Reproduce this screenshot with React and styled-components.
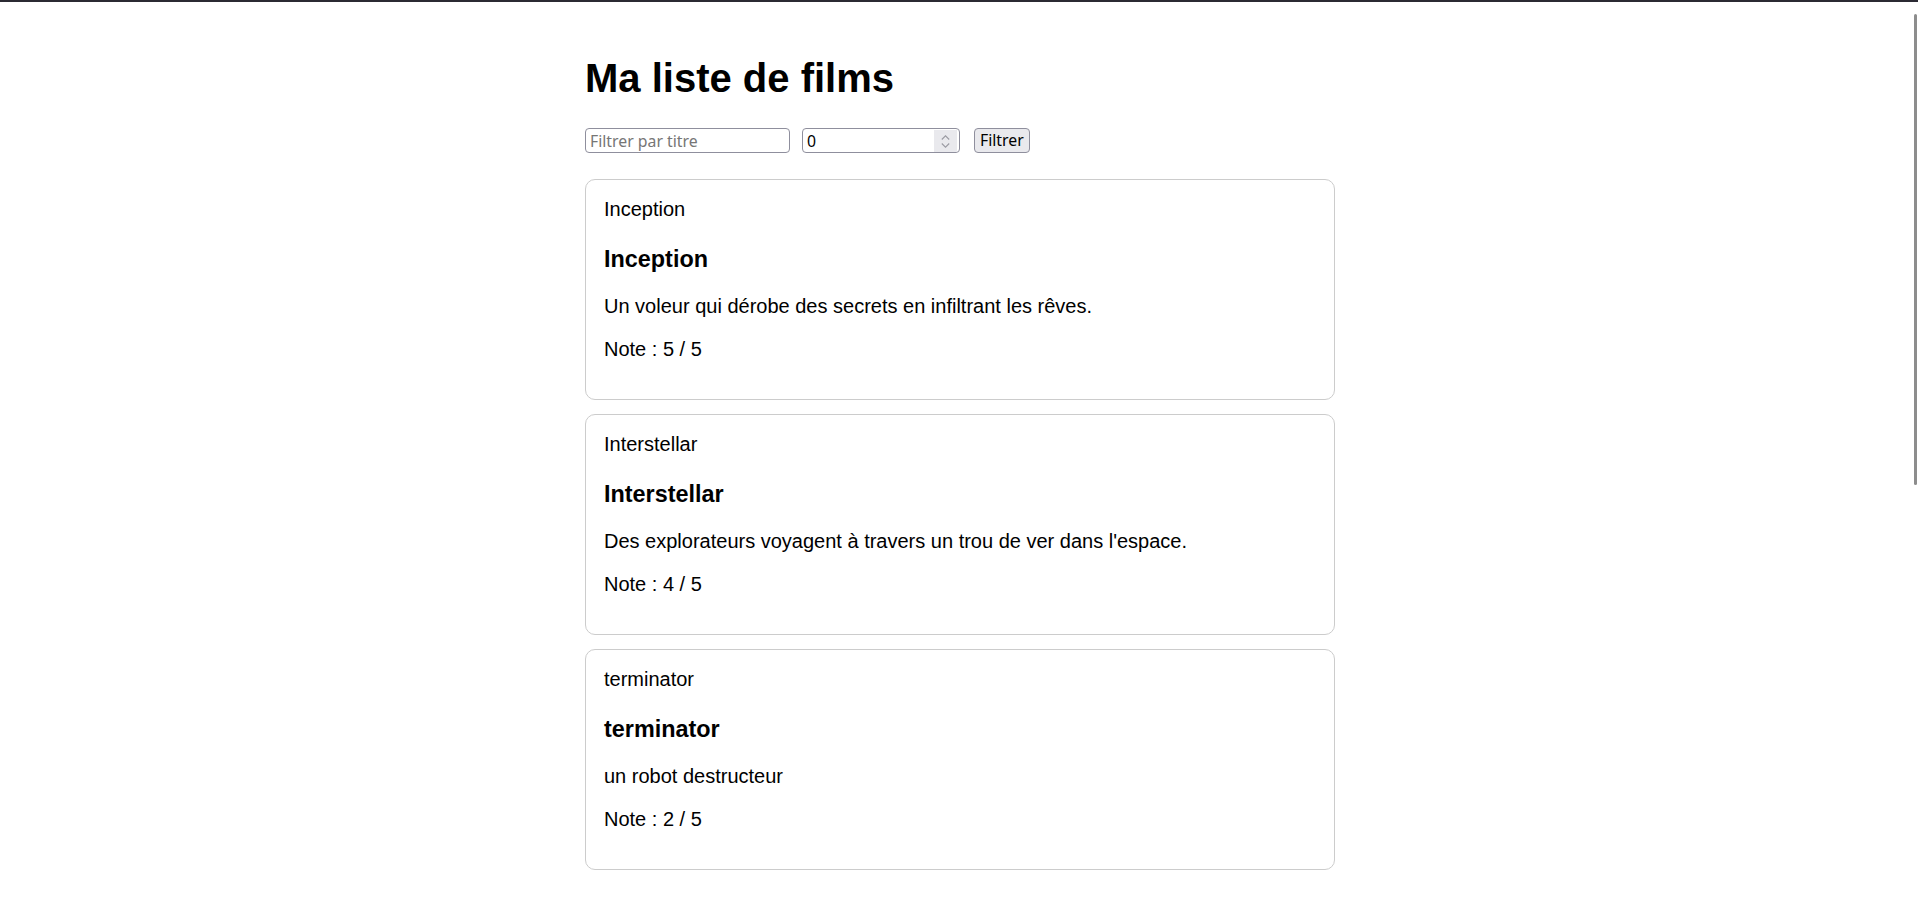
import React, { useState } from "react";
import styled, { createGlobalStyle } from "styled-components";

const GlobalStyle = createGlobalStyle`
  html, body {
    margin: 0;
    padding: 0;
    background: #ffffff;
  }
  body {
    font-family: "Liberation Sans", Arial, sans-serif;
    color: #000000;
    overflow: hidden;
  }
`;

const TopEdge = styled.div`
  height: 2px;
  background: #2b2a33;
`;

const Page = styled.div`
  display: flex;
  justify-content: center;
  padding: 53px 0 0 2px;
`;

const Container = styled.main`
  width: 750px;
`;

const Title = styled.h1`
  margin: 0 0 27px;
  font-size: 40px;
  line-height: 46px;
  font-weight: 700;
`;

const FilterBar = styled.form`
  display: flex;
  align-items: center;
  height: 25px;
  margin: 0 0 26px;
`;

const controlFont = `
  font-family: "Noto Sans", "Open Sans", sans-serif;
  font-size: 15.8px;
`;

const TextInput = styled.input`
  box-sizing: border-box;
  width: 205px;
  height: 25px;
  margin: 0 12px 0 0;
  padding: 0 4px;
  border: 1px solid #8f8f9d;
  border-radius: 4px;
  background: #ffffff;
  color: #000000;
  ${controlFont}
  outline: none;
  &::placeholder {
    color: #767676;
    opacity: 1;
  }
`;

const NumberField = styled.label`
  box-sizing: border-box;
  display: flex;
  align-items: stretch;
  width: 158px;
  height: 25px;
  margin-right: 14px;
  border: 1px solid #8f8f9d;
  border-radius: 4px;
  background: #ffffff;
  overflow: hidden;
`;

const NumberInput = styled.input`
  flex: 1;
  min-width: 0;
  border: none;
  padding: 0 0 0 4px;
  margin: 0;
  background: transparent;
  color: #000000;
  ${controlFont}
  outline: none;
  -moz-appearance: textfield;
  &::-webkit-inner-spin-button,
  &::-webkit-outer-spin-button {
    -webkit-appearance: none;
    margin: 0;
  }
`;

const Spinner = styled.span`
  display: flex;
  flex-direction: column;
  justify-content: center;
  align-items: center;
  gap: 3px;
  width: 23px;
  margin: 1px 2px 0 0;
  height: 22px;
  background: #e9e9ed;
`;

const Chevron = styled.svg`
  display: block;
  width: 9px;
  height: 5px;
`;

const FilterButton = styled.button`
  box-sizing: border-box;
  height: 25px;
  padding: 0 5px;
  margin: 0;
  border: 1px solid #8f8f9d;
  border-radius: 4px;
  background: #e9e9ed;
  color: #000000;
  ${controlFont}
  line-height: 23px;
  cursor: pointer;
`;

const MovieList = styled.section`
  display: flex;
  flex-direction: column;
  gap: 13.5px;
`;

const Card = styled.article`
  border: 1px solid #cccccc;
  border-radius: 10px;
  padding: 18px 18px 18px;
`;

const PosterAlt = styled.div`
  font-size: 20px;
  line-height: 23px;
`;

const MovieTitle = styled.h3`
  margin: 25px 0 22.4px;
  font-size: 23.4px;
  line-height: 27px;
  font-weight: 700;
`;

const Text = styled.p`
  margin: 0 0 20px;
  font-size: 20px;
  line-height: 23px;
`;

const ScrollThumb = styled.div`
  position: fixed;
  top: 14px;
  left: 1914px;
  width: 3px;
  height: 471px;
  border-radius: 2px;
  background: #8d8d8d;
`;

const movies = [
  {
    title: "Inception",
    description: "Un voleur qui dérobe des secrets en infiltrant les rêves.",
    rating: 5,
  },
  {
    title: "Interstellar",
    description: "Des explorateurs voyagent à travers un trou de ver dans l'espace.",
    rating: 4,
  },
  {
    title: "terminator",
    description: "un robot destructeur",
    rating: 2,
  },
];

const ChevronUp = () => (
  <Chevron viewBox="0 0 9 5" fill="none">
    <polyline points="0.8,4.5 4.5,0.8 8.2,4.5" stroke="#9b9ba3" strokeWidth="1.1" />
  </Chevron>
);

const ChevronDown = () => (
  <Chevron viewBox="0 0 9 5" fill="none">
    <polyline points="0.8,0.5 4.5,4.2 8.2,0.5" stroke="#9b9ba3" strokeWidth="1.1" />
  </Chevron>
);

export default function App() {
  const [query, setQuery] = useState("");
  const [minRating, setMinRating] = useState(0);

  return (
    <>
      <GlobalStyle />
      <TopEdge />
      <Page>
        <Container>
          <Title>Ma liste de films</Title>
          <FilterBar onSubmit={(e) => e.preventDefault()}>
            <TextInput
              type="text"
              placeholder="Filtrer par titre"
              value={query}
              onChange={(e) => setQuery(e.target.value)}
            />
            <NumberField>
              <NumberInput
                type="number"
                value={minRating}
                onChange={(e) => setMinRating(e.target.value)}
              />
              <Spinner>
                <ChevronUp />
                <ChevronDown />
              </Spinner>
            </NumberField>
            <FilterButton type="submit">Filtrer</FilterButton>
          </FilterBar>
          <MovieList>
            {movies.map((m) => (
              <Card key={m.title}>
                <PosterAlt>{m.title}</PosterAlt>
                <MovieTitle>{m.title}</MovieTitle>
                <Text>{m.description}</Text>
                <Text>Note : {m.rating} / 5</Text>
              </Card>
            ))}
          </MovieList>
        </Container>
      </Page>
      <ScrollThumb />
    </>
  );
}
